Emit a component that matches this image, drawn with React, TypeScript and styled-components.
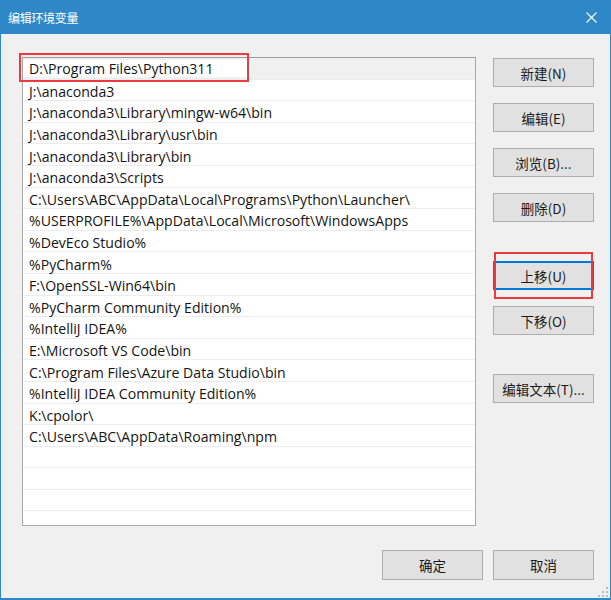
import React from "react";
import styled, { createGlobalStyle } from "styled-components";

const Global = createGlobalStyle`
  html, body { margin: 0; padding: 0; background: #ffffff; }
  body { font-family: "Open Sans", "Noto Sans CJK SC", sans-serif; }
`;

const Window = styled.div`
  position: relative;
  width: 611px;
  height: 600px;
  box-sizing: border-box;
  background: #f0f0f0;
  border: 1px solid #2e87c6;
  border-top: none;
  border-bottom-width: 2px;
  display: flex;
  flex-direction: column;
  overflow: hidden;
`;

const TitleBar = styled.div`
  height: 34px;
  margin: 0 -1px;
  background: #2e87c6;
  display: flex;
  align-items: center;
  justify-content: space-between;
  padding: 0 14px 0 8px;
  flex-shrink: 0;
`;

const Title = styled.span`
  color: #ffffff;
  font-family: "Noto Sans CJK SC", sans-serif;
  font-size: 12px;
  letter-spacing: -0.3px;
`;

const Body = styled.div`
  display: flex;
  flex-direction: column;
  padding: 23px 16px 0 21px;
`;

const Main = styled.div`
  display: flex;
  gap: 17px;
`;

const List = styled.div`
  position: relative;
  width: 454px;
  height: 469px;
  box-sizing: border-box;
  background: #ffffff;
  border: 1px solid #a9a9a9;
  border-top-color: #9b9b9b;
  overflow: hidden;
`;

const Row = styled.div<{ $selected?: boolean }>`
  height: 21.6px;
  box-sizing: border-box;
  border-bottom: 1px solid #ececec;
  background: ${(p) => (p.$selected ? "#f0f0f0" : "#ffffff")};
  display: flex;
  align-items: center;
  padding: 3px 0 0 6px;
  font-family: "Open Sans", "Noto Sans CJK SC", sans-serif;
  font-size: 14.1px;
  color: #141414;
  white-space: nowrap;
`;

const EditBox = styled.span`
  display: flex;
  align-items: center;
  height: 100%;
  width: 222px;
  margin: -3px 0 0 -6px;
  padding: 0 0 0 6px;
  background: #ffffff;
`;

const Highlight = styled.div<{ $l: number; $t: number; $w: number; $h: number }>`
  position: absolute;
  left: ${(p) => p.$l}px;
  top: ${(p) => p.$t}px;
  width: ${(p) => p.$w}px;
  height: ${(p) => p.$h}px;
  box-sizing: border-box;
  border: 2px solid #ea3a40;
  pointer-events: none;
`;

const Side = styled.div`
  display: flex;
  flex-direction: column;
  padding-top: 1px;
`;

const Button = styled.button<{ $gap?: number; $focus?: boolean }>`
  width: 101px;
  height: 29px;
  margin-top: ${(p) => p.$gap ?? 0}px;
  box-sizing: border-box;
  background: #e1e1e1;
  border: ${(p) => (p.$focus ? "2px solid #0078d7" : "1px solid #adadad")};
  padding: 0;
  font-family: "Noto Sans CJK SC", sans-serif;
  font-size: 13.5px;
  color: #1a1a1a;
  display: flex;
  align-items: center;
  justify-content: center;
`;

const Footer = styled.div`
  display: flex;
  justify-content: flex-end;
  gap: 10px;
  margin-top: 24px;
`;

const FootButton = styled(Button)`
  height: 30px;
`;

const Grip = styled.svg`
  position: absolute;
  right: 2px;
  bottom: 1px;
`;

const paths = [
  "D:\\Program Files\\Python311",
  "J:\\anaconda3",
  "J:\\anaconda3\\Library\\mingw-w64\\bin",
  "J:\\anaconda3\\Library\\usr\\bin",
  "J:\\anaconda3\\Library\\bin",
  "J:\\anaconda3\\Scripts",
  "C:\\Users\\ABC\\AppData\\Local\\Programs\\Python\\Launcher\\",
  "%USERPROFILE%\\AppData\\Local\\Microsoft\\WindowsApps",
  "%DevEco Studio%",
  "%PyCharm%",
  "F:\\OpenSSL-Win64\\bin",
  "%PyCharm Community Edition%",
  "%IntelliJ IDEA%",
  "E:\\Microsoft VS Code\\bin",
  "C:\\Program Files\\Azure Data Studio\\bin",
  "%IntelliJ IDEA Community Edition%",
  "K:\\cpolor\\",
  "C:\\Users\\ABC\\AppData\\Roaming\\npm",
];

export default function App() {
  const rows = [...paths, ...Array(6).fill("")];
  return (
    <>
      <Global />
      <Window>
        <TitleBar>
          <Title>编辑环境变量</Title>
          <svg width="11" height="11" viewBox="0 0 11 11">
            <path d="M0.5 0.5 L10.5 10.5 M10.5 0.5 L0.5 10.5" stroke="#ffffff" strokeWidth="1.1" />
          </svg>
        </TitleBar>
        <Body>
          <Main>
            <List>
              {rows.map((r, i) =>
                i === 0 ? (
                  <Row key={i} $selected>
                    <EditBox>{r}</EditBox>
                  </Row>
                ) : (
                  <Row key={i}>{r}</Row>
                )
              )}
            </List>
            <Side>
              <Button>新建(N)</Button>
              <Button $gap={16}>编辑(E)</Button>
              <Button $gap={16}>浏览(B)...</Button>
              <Button $gap={16}>删除(D)</Button>
              <Button $gap={39} $focus>上移(U)</Button>
              <Button $gap={16}>下移(O)</Button>
              <Button $gap={39}>编辑文本(T)...</Button>
            </Side>
          </Main>
          <Footer>
            <FootButton>确定</FootButton>
            <FootButton>取消</FootButton>
          </Footer>
        </Body>
        <Highlight $l={18} $t={53} $w={230} $h={29} />
        <Highlight $l={493} $t={252} $w={99} $h={47} />
        <Grip width="10" height="10" viewBox="0 0 10 10">
          <rect x="8" y="0" width="2" height="2" fill="#bcbcbc" />
          <rect x="4" y="4" width="2" height="2" fill="#bcbcbc" />
          <rect x="8" y="4" width="2" height="2" fill="#bcbcbc" />
          <rect x="0" y="8" width="2" height="2" fill="#bcbcbc" />
          <rect x="4" y="8" width="2" height="2" fill="#bcbcbc" />
          <rect x="8" y="8" width="2" height="2" fill="#bcbcbc" />
        </Grip>
      </Window>
    </>
  );
}
